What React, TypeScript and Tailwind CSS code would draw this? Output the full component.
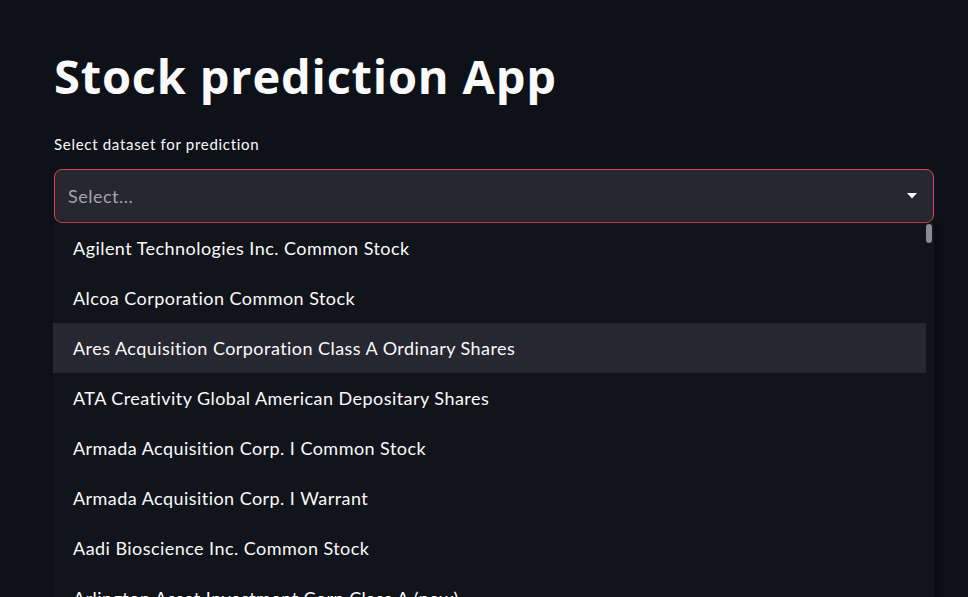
import React from "react";

const options = [
  "Agilent Technologies Inc. Common Stock",
  "Alcoa Corporation Common Stock",
  "Ares Acquisition Corporation Class A Ordinary Shares",
  "ATA Creativity Global American Depositary Shares",
  "Armada Acquisition Corp. I Common Stock",
  "Armada Acquisition Corp. I Warrant",
  "Aadi Bioscience Inc. Common Stock",
  "Arlington Asset Investment Corp Class A (new)",
];

export default function App() {
  return (
    <div
      className="w-[968px] h-[597px] overflow-hidden bg-[#0e1117] text-[#fafafa]"
      style={{ fontFamily: "Lato, 'Noto Sans', sans-serif" }}
    >
      <div className="pl-[54px] pr-[34px] pt-[44px]">
        <h1
          className="text-[47px] leading-[64px] font-bold tracking-[0.8px]"
          style={{ fontFamily: "'Open Sans', sans-serif" }}
        >
          Stock prediction App
        </h1>
        <div className="mt-[26px] text-[15px] leading-[20px] tracking-[0.7px]">Select dataset for prediction</div>
        <div className="mt-[15px] h-[54px] rounded-[8px] border border-[#d6484f] bg-[#262730] flex items-center pl-[13px] pr-[16px]">
          <span className="flex-1 text-[18px] tracking-[0.5px] text-[#a3a3ab]">Select...</span>
          <svg width="10" height="6" viewBox="0 0 10 6">
            <path d="M0 0 H10 L5 5.5 Z" fill="#fafafa" />
          </svg>
        </div>
        <div className="relative -ml-[1px] bg-[#11141b] shadow-[4px_0_6px_rgba(0,0,0,0.35)]">
          {options.map((o, i) => (
            <div
              key={o}
              className={`h-[50px] flex items-center pl-[20px] mr-[8px] text-[18px] tracking-[0.45px] ${i === 2 ? "bg-[#262730]" : ""}`}
            >
              {o}
            </div>
          ))}
          <div className="absolute right-[2px] top-[1px] w-[6px] h-[19px] rounded-full bg-[#8a8b90]" />
        </div>
      </div>
    </div>
  );
}
